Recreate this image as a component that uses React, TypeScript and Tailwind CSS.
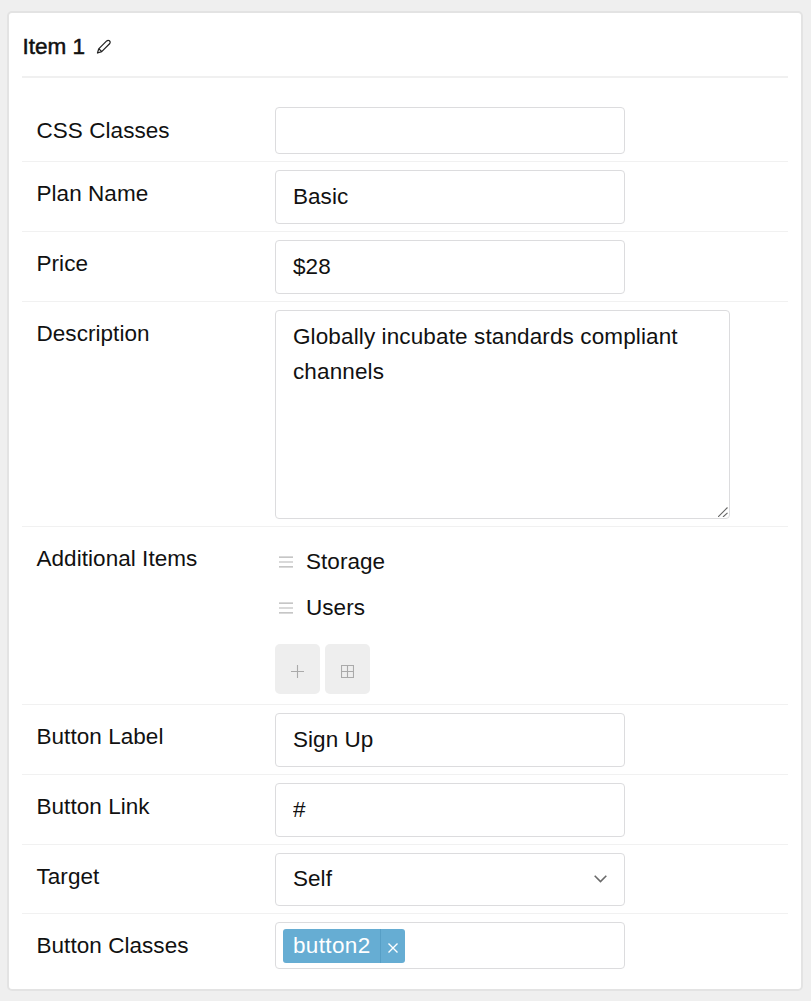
import type { ReactNode } from "react";

const inputBox =
  "block w-[350px] rounded-[4px] border border-[#dcdcde] bg-white px-[17px] text-[22.5px] tracking-[0.05px] text-[#111] outline-none";

function Row({ label, className = "", children }: { label: string; className?: string; children: ReactNode }) {
  return (
    <div className={`flex items-start border-t pl-[14px] pt-2 ${className}`}>
      <div className="w-[239px] shrink-0 pl-[0.5px] pt-[10px] text-[22.5px] leading-[28px] tracking-[0.05px]">{label}</div>
      {children}
    </div>
  );
}

function DragItem({ name }: { name: string }) {
  return (
    <div className="flex h-[46px] items-center pl-1">
      <svg width="14" height="12" viewBox="0 0 14 12" stroke="#b4b4b4" strokeWidth="1.2" aria-hidden="true">
        <path d="M0 1.2h14M0 6h14M0 10.8h14" />
      </svg>
      <span className="ml-[13px] text-[22.5px] leading-[28px] tracking-[0.05px]">{name}</span>
    </div>
  );
}

export default function App() {
  return (
    <div className="h-[1001px] w-[811px] bg-[#efefef] pl-[7px] pt-[11px] font-['Liberation_Sans',Arial,sans-serif] text-[#111]">
      <div className="h-[980px] w-[796px] rounded-[5px] border-2 border-[#e3e3e3] bg-white px-[13px]">
        <header className="flex h-[65px] items-center border-b-2 border-[#f0f0f0] pt-1">
          <h1 className="w-[74px] pl-[0.5px] text-[22.5px] leading-[28px] [-webkit-text-stroke:0.5px_#111]">Item 1</h1>
          <svg width="16" height="16" viewBox="0 0 16 16" fill="none" stroke="#222" strokeWidth="1.25" strokeLinejoin="round" aria-hidden="true">
            <path d="M1.5 14 2.7 9.9 10.7 1.9Q12 .8 13.5 1.7Q14.8 3.1 13.8 4.5L5.7 12.6ZM2.8 9.8l3 2.8" />
          </svg>
        </header>

        <Row label="CSS Classes" className="mt-5 h-[63px] border-transparent">
          <input aria-label="CSS Classes" className={`${inputBox} h-[47px]`} />
        </Row>
        <Row label="Plan Name" className="h-[70px] border-[#f1f1f1]">
          <input aria-label="Plan Name" defaultValue="Basic" className={`${inputBox} h-[54px]`} />
        </Row>
        <Row label="Price" className="h-[70px] border-[#f1f1f1]">
          <input aria-label="Price" defaultValue="$28" className={`${inputBox} h-[54px]`} />
        </Row>
        <Row label="Description" className="h-[225px] border-[#f1f1f1]">
          <div className="relative">
            <textarea
              aria-label="Description"
              defaultValue="Globally incubate standards compliant channels"
              className="block h-[209px] w-[455px] resize-none rounded-[4px] border border-[#dcdcde] bg-white px-[17px] pt-2 text-[22.5px] leading-[35px] tracking-[0.12px] text-[#111] outline-none"
            />
            <svg className="absolute bottom-[2px] right-[2px]" width="10" height="10" viewBox="0 0 10 10" stroke="#666" strokeWidth="1.1" aria-hidden="true">
              <path d="M0 10 9.5 .5M5 10 9.5 5.8" />
            </svg>
          </div>
        </Row>
        <Row label="Additional Items" className="h-[178px] border-[#f1f1f1]">
          <div className="pt-1">
            <DragItem name="Storage" />
            <DragItem name="Users" />
            <div className="mt-[13px] flex gap-[5px]">
              <button aria-label="Add item" className="flex h-[50px] w-[45px] items-center justify-center rounded-[5px] bg-[#eeeeee] pr-px pt-[5px]">
                <svg width="13" height="13" viewBox="0 0 13 13" stroke="#aaa" strokeWidth="1.1">
                  <path d="M6.5 0v13M0 6.5h13" />
                </svg>
              </button>
              <button aria-label="Add table" className="flex h-[50px] w-[45px] items-center justify-center rounded-[5px] bg-[#eeeeee] pt-[5px]">
                <svg width="13" height="13" viewBox="0 0 13 13" fill="none" stroke="#aaa" strokeWidth="1.1">
                  <path d="M.5 .5h12v12H.5ZM6.5 .5v12M.5 6.5h12" />
                </svg>
              </button>
            </div>
          </div>
        </Row>
        <Row label="Button Label" className="h-[70px] border-[#f1f1f1]">
          <input aria-label="Button Label" defaultValue="Sign Up" className={`${inputBox} h-[54px]`} />
        </Row>
        <Row label="Button Link" className="h-[70px] border-[#f1f1f1]">
          <input aria-label="Button Link" defaultValue="#" className={`${inputBox} h-[54px]`} />
        </Row>
        <Row label="Target" className="h-[69px] border-[#f1f1f1]">
          <button className="flex h-[53px] w-[350px] items-center justify-between rounded-[4px] border border-[#dcdcde] bg-white pb-[2px] pl-[17px] pr-[17px] text-[22.5px] tracking-[0.05px]">
            <span>Self</span>
            <svg width="13" height="8" viewBox="0 0 13 8" fill="none" stroke="#6a6a6a" strokeWidth="1.6" aria-hidden="true">
              <path d="m.7 .8 5.8 5.8L12.3 .8" />
            </svg>
          </button>
        </Row>
        <Row label="Button Classes" className="border-[#f1f1f1]">
          <div className="flex h-[47px] w-[350px] items-center rounded-[4px] border border-[#dcdcde] bg-white pl-[7px]">
            <div className="flex h-[34px] w-[122px] items-stretch rounded-[3px] bg-[#66add3] text-white">
              <span className="w-[97px] pl-[10px] text-[22.5px] leading-[34px] tracking-[0.35px]">button2</span>
              <button aria-label="Remove button2" className="flex w-[25px] items-center justify-center border-l border-[#579fc6] pt-1">
                <svg width="10" height="10" viewBox="0 0 10 10" stroke="white" strokeWidth="1.4">
                  <path d="m.5 .5 9 9m0-9-9 9" />
                </svg>
              </button>
            </div>
          </div>
        </Row>
      </div>
    </div>
  );
}
